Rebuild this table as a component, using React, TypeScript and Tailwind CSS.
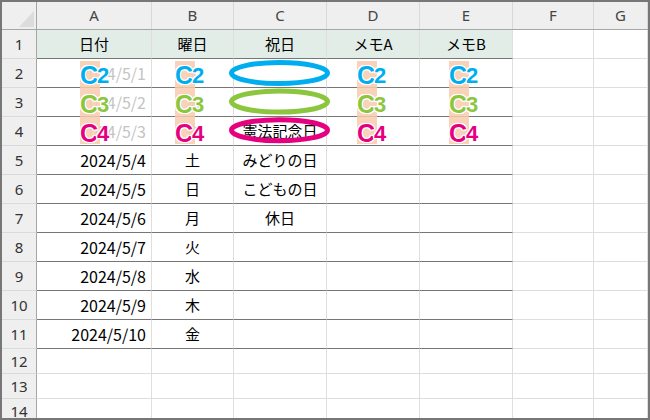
import React from "react";

const COLS = [
  { key: "A", w: "w-[115px]" },
  { key: "B", w: "w-[82px]" },
  { key: "C", w: "w-[93px]" },
  { key: "D", w: "w-[93px]" },
  { key: "E", w: "w-[93px]" },
  { key: "F", w: "w-[81px]" },
  { key: "G", w: "flex-1" },
];

type Row = { n: number; h: string; cells: string[]; faint?: boolean };

const ROWS: Row[] = [
  { n: 1, h: "h-[29px]", cells: ["日付", "曜日", "祝日", "メモA", "メモB"] },
  { n: 2, h: "h-[29px]", cells: ["2024/5/1", "水", "", "", ""], faint: true },
  { n: 3, h: "h-[29px]", cells: ["2024/5/2", "木", "", "", ""], faint: true },
  { n: 4, h: "h-[29px]", cells: ["2024/5/3", "金", "憲法記念日", "", ""], faint: true },
  { n: 5, h: "h-[29px]", cells: ["2024/5/4", "土", "みどりの日", "", ""] },
  { n: 6, h: "h-[29px]", cells: ["2024/5/5", "日", "こどもの日", "", ""] },
  { n: 7, h: "h-[29px]", cells: ["2024/5/6", "月", "休日", "", ""] },
  { n: 8, h: "h-[29px]", cells: ["2024/5/7", "火", "", "", ""] },
  { n: 9, h: "h-[29px]", cells: ["2024/5/8", "水", "", "", ""] },
  { n: 10, h: "h-[29px]", cells: ["2024/5/9", "木", "", "", ""] },
  { n: 11, h: "h-[29px]", cells: ["2024/5/10", "金", "", "", ""] },
  { n: 12, h: "h-[25px]", cells: [] },
  { n: 13, h: "h-[25px]", cells: [] },
  { n: 14, h: "h-[25px]", cells: [] },
];

const font = "font-['Noto_Sans_CJK_JP','Noto_Sans',sans-serif]";

// marker colours for rows 2–4
const MARKS = [
  { label: "2", color: "text-[#00aeef]", stroke: "#00aeef" },
  { label: "3", color: "text-[#8cc63f]", stroke: "#8cc63f" },
  { label: "4", color: "text-[#e4007f]", stroke: "#e4007f" },
];

const outline =
  "[text-shadow:1px_0_#fff,-1px_0_#fff,0_1px_#fff,0_-1px_#fff,1px_1px_#fff,-1px_-1px_#fff,1px_-1px_#fff,-1px_1px_#fff]";

// peach strip with three stacked "C2/C3/C4" stamps, laid over cells
function Marker({ left }: { left: string }) {
  return (
    <div className={`absolute top-[59px] ${left} h-[83px] w-[20px]`}>
      <div className="absolute inset-0 bg-[#f8cbad]/85" />
      <div className="relative flex flex-col">
        {MARKS.map((m) => (
          <div
            key={m.label}
            className={`flex h-[29px] items-center whitespace-nowrap font-['Liberation_Sans',sans-serif] font-bold leading-none ${m.color} ${outline}`}
          >
            <span className="text-[25px] tracking-[-1px]">C</span>
            <span className="text-[22px]">{m.label}</span>
          </div>
        ))}
      </div>
    </div>
  );
}

function Ovals() {
  return (
    <svg className="absolute left-[224px] top-[55px]" width="108" height="90">
      {MARKS.map((m, i) => (
        <ellipse
          key={m.label}
          cx="53.5"
          cy={16 + i * 28.6}
          rx="48"
          ry="10.5"
          fill="none"
          stroke={m.stroke}
          strokeWidth="5"
        />
      ))}
    </svg>
  );
}

export default function App() {
  return (
    <div className={`relative h-[420px] w-[650px] overflow-hidden border-2 border-[#777] bg-white ${font}`}>
      {/* column headers */}
      <div className="flex h-[28px] border-b border-[#a6a6a6] bg-[#efefef]">
        <div className="relative w-[35px] shrink-0 border-r border-[#a6a6a6]">
          <svg className="absolute left-0 top-0" width="34" height="27">
            <polygon points="17,25 32,9 32,25" fill="#dcdcdc" />
          </svg>
        </div>
        {COLS.map((c) => (
          <div
            key={c.key}
            className={`${c.w} shrink-0 flex items-center justify-center border-r border-[#d9d9d9] font-['Noto_Sans',sans-serif] text-[15px] text-[#444]`}
          >
            {c.key}
          </div>
        ))}
      </div>

      {ROWS.map((r) => (
        <div key={r.n} className={`flex ${r.h}`}>
          <div className="flex w-[35px] shrink-0 items-center justify-center border-r border-b border-r-[#a6a6a6] border-b-[#dadada] bg-[#efefef] font-['Noto_Sans',sans-serif] text-[15px] text-[#333]">
            {r.n}
          </div>
          {COLS.map((c, ci) => {
            const inTable = r.n <= 11 && ci < 5;
            const text = r.cells[ci] ?? "";
            const header = r.n === 1 && ci < 5;
            const align = ci === 0 && r.n > 1 ? "justify-end pr-[5px]" : "justify-center";
            const size = ci === 0 && r.n > 1 ? "text-[16px]" : "text-[15px]";
            const faint = r.faint && (ci === 0 || ci === 1) ? "text-[#c4c4c4]" : "text-black";
            return (
              <div
                key={c.key}
                className={`${c.w} shrink-0 flex items-center ${align} ${size} ${faint} border-r border-b border-r-[#dedede] ${
                  inTable ? "border-b-[#767676]" : "border-b-[#dedede]"
                } ${header ? "bg-[#e2ede8]" : ""}`}
              >
                {text}
              </div>
            );
          })}
        </div>
      ))}

      <Ovals />
      <Marker left="left-[78px]" />
      <Marker left="left-[173px]" />
      <Marker left="left-[355px]" />
      <Marker left="left-[447px]" />
    </div>
  );
}
